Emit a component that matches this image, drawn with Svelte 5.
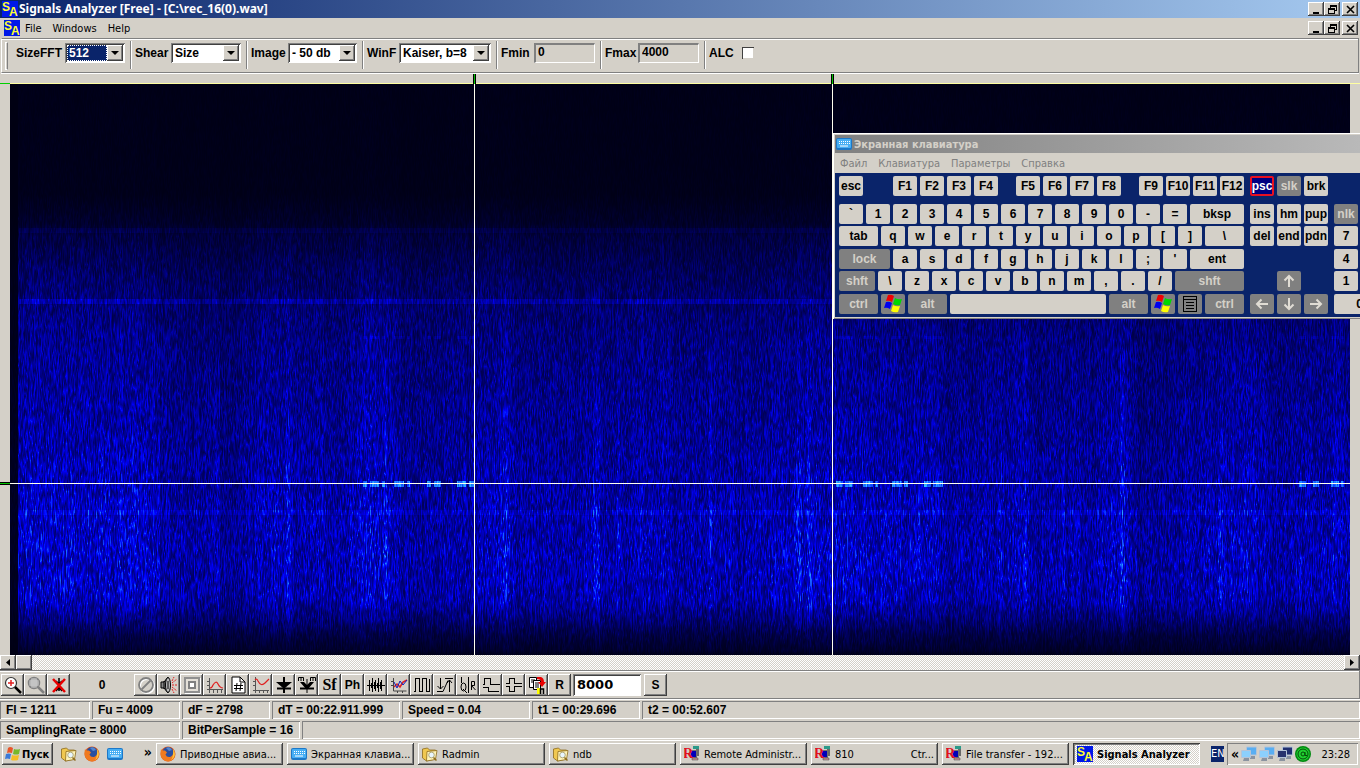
<script lang="ts">
    import { onMount } from 'svelte';

    let canvas: HTMLCanvasElement | undefined;
    let alc: boolean = false;
    let rate: string = "8000";
    let fmin: string = "0";
    let fmax: string = "4000";

    interface Key {
        t: string;
        w?: number;
        off?: boolean;
        gap?: boolean;
        hot?: boolean;
        icon?: string;
    }

    const combos = [
        { id: "sizefft", label: "SizeFFT", value: "512", width: 109, box: 60, active: true },
        { id: "shear", label: "Shear", value: "Size", width: 106, box: 70, active: false },
        { id: "image", label: "Image", value: "- 50 db", width: 106, box: 69, active: false },
        { id: "winf", label: "WinF", value: "Kaiser, b=8", width: 124, box: 92, active: false }
    ];

    const toolsLeft = ["zoomin", "zoomout", "cancel"];
    const tools = ["stop", "speaker", "square", "peak", "hash", "dip", "down", "mm", "Sf", "Ph", "wave", "chart", "pulse", "updown", "qr", "step", "level", "copy", "R"];

    const status1 = [
        { text: "Fl = 1211", w: 90 }, { text: "Fu = 4009", w: 88 }, { text: "dF = 2798", w: 88 },
        { text: "dT = 00:22.911.999", w: 128 }, { text: "Speed = 0.04", w: 128 },
        { text: "t1 = 00:29.696", w: 108 }, { text: "t2 = 00:52.607", w: 0 }
    ];
    const status2 = [
        { text: "SamplingRate = 8000", w: 180 }, { text: "BitPerSample = 16", w: 118 }, { text: "", w: 0 }
    ];

    const tasks = [
        { icon: "firefox", text: "Приводные авиа..." },
        { icon: "keyboard", text: "Экранная клавиа..." },
        { icon: "folder", text: "Radmin" },
        { icon: "folder", text: "ndb" },
        { icon: "radmin", text: "Remote Administr..." },
        { icon: "radmin", text: "810", tail: "Ctr..." },
        { icon: "radmin", text: "File transfer - 192..." },
        { icon: "sa", text: "Signals Analyzer", active: true }
    ];

    function keys(list: string): Key[] {
        return list.split(" ").map((t) => ({ t }));
    }
    const space = (w: number): Key => ({ t: "", w, gap: true });

    const mainRows: Key[][] = [
        [{ t: "esc" }, space(24), ...keys("F1 F2 F3 F4"), space(12), ...keys("F5 F6 F7 F8"), space(12), ...keys("F9 F10 F11 F12")],
        [...keys("` 1 2 3 4 5 6 7 8 9 0 - ="), { t: "bksp", w: 54 }],
        [{ t: "tab", w: 39 }, ...keys("q w e r t y u i o p [ ]"), { t: "\\", w: 39 }],
        [{ t: "lock", w: 51, off: true }, ...keys("a s d f g h j k l ; '"), { t: "ent", w: 54 }],
        [{ t: "shft", w: 36, off: true }, ...keys("\\ z x c v b n m , . /"), { t: "shft", w: 69, off: true }],
        [{ t: "ctrl", w: 39, off: true }, { t: "", off: true, icon: "win" }, { t: "alt", w: 39, off: true }, { t: "", w: 156 },
            { t: "alt", w: 39, off: true }, { t: "", off: true, icon: "win" }, { t: "", off: true, icon: "menu" }, { t: "ctrl", w: 39, off: true }]
    ];
    const navRows: Key[][] = [
        [{ t: "psc", hot: true }, { t: "slk", off: true }, { t: "brk" }],
        keys("ins hm pup"),
        keys("del end pdn"),
        [],
        [space(24), { t: "", off: true, icon: "up" }],
        [{ t: "", off: true, icon: "left" }, { t: "", off: true, icon: "downarrow" }, { t: "", off: true, icon: "right" }]
    ];
    const padRows: Key[][] = [[], [{ t: "nlk", off: true }], keys("7"), keys("4"), keys("1"), [{ t: "0", w: 51 }]];
    const blocks = [mainRows, navRows, padRows];

    // brightness by height and by time, as [position, level] points
    const rowPoints = [[0, 0.02], [110, 0.03], [140, 0.09], [152, 0.17], [200, 0.31], [260, 0.42], [350, 0.51], [400, 0.56], [470, 0.62], [515, 0.59], [535, 0.38], [550, 0.2], [565, 0.1], [571, 0.02]];
    const colPoints = [[0, 0.1], [7, 0.1], [8, 1.06], [144, 1.06], [147, 0.86], [206, 0.88], [211, 0.72], [230, 0.84], [265, 1], [300, 0.95], [330, 0.9], [356, 1.1], [384, 1.05], [392, 0.82], [440, 0.88], [470, 0.95], [500, 1], [507, 0.88], [560, 0.92], [640, 0.95], [730, 0.92], [782, 0.95], [822, 1.05], [862, 1], [930, 0.98], [938, 0.84], [1012, 1], [1020, 0.87], [1080, 0.87], [1112, 1.08], [1130, 0.78], [1185, 0.95], [1240, 1.02], [1270, 0.87], [1340, 1]];
    const stripes = [[148, 1], [208, 1], [278, 2], [375, 2], [495, 2], [586, 3], [608, 1], [700, 1], [787, 3], [799, 2], [1015, 1], [1053, 1], [1112, 2], [1210, 2], [1290, 1]];
    const bursts = [[353, 4], [360, 9], [372, 3], [384, 10], [397, 3], [417, 4], [424, 7], [447, 9], [459, 5], [826, 7], [835, 8], [853, 10], [865, 3], [882, 10], [894, 4], [914, 7], [923, 10], [1289, 7], [1303, 6], [1321, 8], [1331, 3]];

    function lerpPoints(points: number[][], x: number): number {
        for (let i = 1; i < points.length; i++) {
            if (x <= points[i][0]) {
                const [x0, y0] = points[i - 1];
                const [x1, y1] = points[i];
                return y0 + (y1 - y0) * (x - x0) / (x1 - x0);
            }
        }
        return points[points.length - 1][1];
    }

    function draw(): void {
        if (!canvas) return;
        const w = canvas.clientWidth;
        const h = canvas.clientHeight;
        canvas.width = w;
        canvas.height = h;
        const ctx = canvas.getContext("2d");
        if (!ctx) return;

        let seed = 1211;
        const rnd = () => {
            seed = (seed * 1664525 + 1013904223) >>> 0;
            return seed / 4294967296;
        };
        const img = ctx.createImageData(w, h);
        let slow = 0;
        for (let x = 0; x < w; x++) {
            const px = x * 1340 / w;
            slow = slow * 0.75 + (rnd() - 0.5) * 0.1;
            const col = lerpPoints(colPoints, px) * (1 + slow + (rnd() - 0.5) * 0.14);
            let glow = 0;
            for (const [sx, sw] of stripes) {
                if (Math.abs(px - sx) <= sw) glow = 0.25;
            }
            const burst = bursts.some(([bx, bw]) => px >= bx && px < bx + bw);
            const tone = 0.5 + rnd();
            let a = rnd();
            let b = rnd();
            let step = 0;
            let len = 3;
            for (let y = 0; y < h; y++) {
                const py = y * 571 / h;
                if (step >= len) {
                    a = b;
                    b = rnd();
                    step = 0;
                    len = 3 + Math.floor(rnd() * 4);
                }
                const n = a + (b - a) * step / len;
                step++;
                let v = lerpPoints(rowPoints, py);
                v *= (col + glow * Math.min(1, py / 450)) * (0.5 + 0.85 * n + 0.3 * n * n * n);
                if (px > 8) {
                    if (py > 143 && py < 149) v += 0.07 * col * tone;
                    if (py > 214 && py < 220) v += 0.2 * col * tone;
                    if (py > 425 && py < 431) v += 0.12 * col * tone;
                    if (burst && py > 251 && py < 255) v += 0.12;
                    if (burst && py > 396 && py < 403) v = 0.95 + n * 0.5;
                }
                const i = (y * w + x) * 4;
                img.data[i] = v > 0.9 ? Math.min(60, (v - 0.9) * 100) : 0;
                img.data[i + 1] = v > 0.84 ? Math.min(200, (v - 0.84) * 340) : 0;
                img.data[i + 2] = Math.min(255, 18 + v * 280);
                img.data[i + 3] = 255;
            }
        }
        ctx.putImageData(img, 0, 0);
    }

    onMount(() => {
        draw();
    });
</script>

<svelte:window on:resize={draw} />

{#snippet icon(name: string)}
    {#if name === "sa"}
        <svg class="i16" viewBox="0 0 16 16"><rect width="16" height="16" fill="#0018e8" /><text x="0" y="10" class="sa-text">S</text><text x="7" y="15" class="sa-text">A</text></svg>
    {:else if name === "keyboard"}
        <svg class="i16" viewBox="0 0 16 16"><rect x="0" y="2" width="16" height="12" rx="2" fill="#1d78c8" /><rect x="1" y="3" width="14" height="9" rx="1" fill="#46aef4" /><path d="M3 5.5h11M3 7.5h11" stroke="#fff" stroke-dasharray="1 1" /><path d="M4 10h8" stroke="#fff" /></svg>
    {:else if name === "folder"}
        <svg class="i16" viewBox="0 0 16 16"><path d="M.5 3l5-1 2 2h6v9l-9 2-4-3z" fill="#f0c850" stroke="#8c6a1c" stroke-width=".8" /><path d="M5 5.500l10-1-1.500 9-9 1.500z" fill="#fff3b8" stroke="#8c6a1c" stroke-width=".8" /><circle cx="9.500" cy="9" r="2.800" fill="#e9f6ff" stroke="#a09868" stroke-width=".8" /><path d="M11.500 11.500l3 3" stroke="#8c6a1c" stroke-width="1.500" /></svg>
    {:else if name === "firefox"}
        <svg class="i16" viewBox="0 0 16 16"><circle cx="8" cy="8" r="7.5" fill="#d9541a" /><circle cx="8" cy="6.500" r="5.500" fill="#2a4f9f" /><path d="M6 2q4-2 6 2l-3 1z" fill="#5286cf" /><path d="M1 3q1 2 4 1.500l2 2-1.500 2q1 3 4.500 2.500 3-1 3.500-5 3 3 0 7-3 3.500-8 2Q-1 12 1 3z" fill="#f07a20" /><path d="M13 3q3 4 1 8-1 2-3 3 3-4 2-11z" fill="#ffc83a" /></svg>
    {:else if name === "radmin"}
        <svg class="i16" viewBox="0 0 16 16"><path d="M9 0h6v3H9z" fill="#2a9a8a" /><path d="M12 3h3v7h-3z" fill="#686868" /><path d="M6 4h7v8H6z" fill="#707070" /><path d="M7 5h5v6H7z" fill="#0000b8" /><path d="M8 12h6v2H8z" fill="#c89090" stroke="#444" stroke-width=".5" /><text x="-1" y="12" class="r-text">R</text></svg>
    {:else if name === "win"}
        <svg class="i20" viewBox="0 0 20 20"><path d="M5 1q3-1 6 1L9 8Q6 6 3 7z" fill="#f00000" /><path d="M12 4q3 2 7 1l-2 6q-4 1-7-1z" fill="#00d800" /><path d="M3 8q3-1 6 1l-2 6q-3-2-6-1z" fill="#0000f0" /><path d="M10 11q3 2 7 1l-2 6q-4 1-7-1z" fill="#ffff00" /></svg>
    {:else if name === "start"}
        <svg class="i16" viewBox="0 0 16 16"><path d="M4 2q2-2 5 0L8 7Q5 6 3 7z" fill="#e8562a" /><path d="M10 3q3 1 6 0l-1 5q-3 1-6 0z" fill="#77b82a" /><path d="M2 8q3-1 5 0l-1 5q-3-1-5 0z" fill="#3a7ad8" /><path d="M8 9q3 1 7 0l-1 5q-4 1-7 0z" fill="#f5bd25" /></svg>
    {:else if name === "menu"}
        <svg class="i16 crisp" viewBox="0 0 16 16"><path d="M1 0h14v16H1z" fill="#000" /><path d="M2 1h12v2H2zM2 4h12v11H2z" fill="#808080" /><path d="M4 6.500h8M4 9.500h8M4 12.500h8" stroke="#000" /></svg>
    {:else if name === "up" || name === "downarrow" || name === "left" || name === "right"}
        <svg class="i16 {name}" viewBox="0 0 16 16"><path d="M8 14V3M3.500 7.500L8 3l4.500 4.500" fill="none" stroke="#e0dcd4" stroke-width="2" /></svg>
    {:else if name === "zoomin"}
        <svg class="i18" viewBox="0 0 18 18"><circle cx="7" cy="7" r="5.500" fill="#fff" stroke="#333" stroke-width="1.200" /><path d="M4 7h6M7 4v6" stroke="#e02020" stroke-width="1.500" /><path d="M11 11l6 6" stroke="#000" stroke-width="2.500" /></svg>
    {:else if name === "zoomout"}
        <svg class="i18" viewBox="0 0 18 18"><circle cx="7" cy="7" r="5.500" fill="#aaa" stroke="#808080" stroke-width="1.500" /><path d="M2 5h10M2 7h10M2 9h10M5 2v10M7 2v10M9 2v10" stroke="#ddd" stroke-width=".6" /><path d="M11 11l6 6" stroke="#808080" stroke-width="2.500" /></svg>
    {:else if name === "cancel"}
        <svg class="i18" viewBox="0 0 18 18"><path d="M9 2v13M6 5l3 3 3-3M6 15l3-4 3 4" stroke="#000" fill="none" stroke-width="1.500" /><path d="M3 3l12 13M15 3L3 16" stroke="#e80000" stroke-width="2.500" /></svg>
    {:else if name === "stop"}
        <svg class="i18" viewBox="0 0 18 18"><circle cx="10" cy="10" r="7" fill="none" stroke="#fff" stroke-width="2" /><g fill="none" stroke="#808080" stroke-width="1.800"><circle cx="9" cy="9" r="7" /><path d="M4.500 13.500l9-9" /></g></svg>
    {:else if name === "speaker"}
        <svg class="i18" viewBox="0 0 18 18"><path d="M1 6h3l4-5v16l-4-5H1z" fill="#888" stroke="#000" /><ellipse cx="8" cy="9" rx="2.500" ry="7.500" fill="#bbb" stroke="#000" /><path d="M8 5v8M4 5v8" stroke="#000" /><path d="M12 7l5-4M12 9h5M12 11l5 4M12 5l2-4M12 13l2 4" stroke="#e02020" stroke-dasharray="2 1" /></svg>
    {:else if name === "square"}
        <svg class="i18 crisp" viewBox="0 0 18 18"><path d="M2 2h16v16H2z" fill="#fff" /><path d="M1 1h16v16H1z" fill="#909090" /><path d="M3 3h12v12H3z" fill="#e4e0d8" /><path d="M5 5h8v8H5z" fill="#808080" /><path d="M7 7h4v4H7z" fill="#fff" /></svg>
    {:else if name === "peak"}
        <svg class="i18" viewBox="0 0 18 18"><path d="M3.500 2v15M1 5.500h3M1 9.500h3M1 13.500h16M7.500 13v4M11.500 13v4M15.500 13v4" stroke="#555" /><path d="M4 12q2 0 3-3 3-5 5-1 2 4 5 4" stroke="#e02020" fill="none" stroke-width="1.200" /></svg>
    {:else if name === "hash"}
        <svg class="i18" viewBox="0 0 18 18"><path d="M3 1h8l5 5v11H3z" fill="#fff" stroke="#000" /><path d="M11 1v5h5" fill="none" stroke="#000" /><path d="M8 7l-1 8M12 7l-1 8M5 9.500h9M5 12.500h9" stroke="#000" /></svg>
    {:else if name === "dip"}
        <svg class="i18" viewBox="0 0 18 18"><path d="M3.500 1v16M1 5.500h3M1 9.500h3M1 14.500h16M7.500 14v3M11.500 14v3M15.500 14v3" stroke="#555" /><path d="M3 4q2-2 3 1 3 6 7 2l4-4" stroke="#e02020" fill="none" stroke-width="1.200" /></svg>
    {:else if name === "down"}
        <svg class="i18" viewBox="0 0 18 18"><path d="M9 1v5M9 12v5" stroke="#000" stroke-width="2" /><path d="M1 6h16l-7 6H8z" fill="#000" /><path d="M2 12.500h14" stroke="#000" stroke-width="2" /></svg>
    {:else if name === "mm"}
        <svg class="i18" viewBox="0 0 18 18"><path d="M.5 5V1.500h5V5M3 1.500V5M12.500 5V1.500h5V5M15 1.500V5M9 3v14" stroke="#000" fill="none" /><path d="M2 6h4l3 3 3-3h4l-6 7H8z" fill="#000" /><path d="M2 12.500h14" stroke="#000" stroke-width="2" /></svg>
    {:else if name === "wave"}
        <svg class="i18 crisp" viewBox="0 0 18 18"><path d="M0 9.500h18M2.500 4v11M5.500 2v14M8.500 4v11M11.500 2v14M14.500 4v11M4 7v5M7 6v7M10 7v5M13 6v7" stroke="#000" /></svg>
    {:else if name === "chart"}
        <svg class="i18" viewBox="0 0 18 18"><path d="M3.500 2v13h13M1 5.500h3M1 9.500h3M7.500 15v2M12.500 15v2" stroke="#444" fill="none" /><path d="M4 11l3-3 3 3 3-5 4-2" stroke="#e02020" fill="none" stroke-width="1.500" /><path d="M4 6l3 6 3-7 3 4 4-5" stroke="#1020c0" fill="none" /></svg>
    {:else if name === "pulse"}
        <svg class="i18 crisp" viewBox="0 0 18 18"><path d="M1 15.500h1.500v-13h4v13h3v-13h4v13h3v-13" stroke="#000" fill="none" /></svg>
    {:else if name === "updown"}
        <svg class="i18" viewBox="0 0 18 18"><path d="M4.500 2v11M1.500 10l3 3 3-3M1 15.500h6l5-11M9 2.500h8M13.500 16V4M11 7l2.500-3L16 7" stroke="#000" fill="none" /></svg>
    {:else if name === "qr"}
        <svg class="i18" viewBox="0 0 18 18"><path d="M2.500 1v6M9.500 1v16" stroke="#000" /><ellipse cx="4.500" cy="11" rx="2.500" ry="4" stroke="#000" fill="none" /><path d="M4 13l4 4" stroke="#000" /><path d="M12.500 14V5.500h3v4h-3l4 4.500" stroke="#000" fill="none" /></svg>
    {:else if name === "step"}
        <svg class="i18 crisp" viewBox="0 0 18 18"><path d="M1 8.500h1.500v-6h6v6h9M1 11.500h5v4h11" stroke="#000" fill="none" /></svg>
    {:else if name === "level"}
        <svg class="i18 crisp" viewBox="0 0 18 18"><path d="M1 7.500h3v-5h5v5h8M1 10.500h3v5h5v-5h8" stroke="#000" fill="none" /></svg>
    {:else if name === "copy"}
        <svg class="i18" viewBox="0 0 18 18"><path d="M1.500 1.500h7v10h-7z" fill="#fff" stroke="#000" /><path d="M5.500 4.500h7v9h-7z" fill="#fff" stroke="#000" /><path d="M3 4h4M3 6h2M7 7h4M7 9h4M7 11h4" stroke="#000" /><path d="M9 1h4q3 1 3 5h2l-4 5-4-5h3q0-3-4-3z" fill="#e80000" /><path d="M9 12h3v6H9z" fill="#ff0" /><path d="M12.500 18v-5h3v5" fill="none" stroke="#000" stroke-width="1.500" /></svg>
    {:else if name === "net" || name === "netoff"}
        <svg class="i16" viewBox="0 0 16 16"><path d="M5.500 1h10v8h-10z" fill={name === "net" ? "#59aef2" : "#223070"} stroke="#b4c4d8" /><path d="M9 10h5v3H9z" fill="#8a93a0" /><path d="M.5 4.500h9v7h-9z" fill={name === "net" ? "#8cd0fd" : "#28336e"} stroke="#b4c4d8" /><path d="M3 12h5v3H2z" fill="#8a93a0" /></svg>
    {:else if name === "at"}
        <svg class="i16" viewBox="0 0 16 16"><circle cx="8" cy="8" r="8" fill="#008a10" /><circle cx="8" cy="8" r="6.500" fill="#20d030" /><circle cx="8" cy="8" r="5" fill="none" stroke="#044c08" /><circle cx="8" cy="8" r="2" fill="none" stroke="#044c08" /><path d="M10 6v3q1 2 2 0" fill="none" stroke="#044c08" /></svg>
    {:else if name === "min"}
        <svg class="i9 crisp" viewBox="0 0 9 9"><path d="M1 7h6v2H1z" /></svg>
    {:else if name === "restore"}
        <svg class="i9 crisp" viewBox="0 0 9 9"><path d="M2.500 3V.5h6v5H7M2 1.500h7M.5 3.500h6v5h-6zM0 4.500h7" fill="none" stroke="#000" /></svg>
    {:else if name === "close"}
        <svg class="i9" viewBox="0 0 9 9"><path d="M1 1l7 7M8 1L1 8" fill="none" stroke="#000" stroke-width="1.600" /></svg>
    {:else if name === "Sf"}
        <span class="serif">Sf</span>
    {:else}
        <span>{name}</span>
    {/if}
{/snippet}

{#snippet windowButtons()}
    <div class="win-buttons">
        <button class="raised" aria-label="Minimize">{@render icon("min")}</button>
        <button class="raised" aria-label="Restore">{@render icon("restore")}</button>
        <button class="raised last" aria-label="Close">{@render icon("close")}</button>
    </div>
{/snippet}

<div class="desktop">
    <header class="title-bar">
        {@render icon("sa")}
        <h1>Signals Analyzer [Free] - [C:\rec_16(0).wav]</h1>
        {@render windowButtons()}
    </header>

    <nav class="menu-bar">
        {@render icon("sa")}
        <button>File</button>
        <button>Windows</button>
        <button>Help</button>
        {@render windowButtons()}
    </nav>

    <div class="top-tools">
        <div class="grip"></div>
        {#each combos as c}
            <div class="field" style="width: {c.width}px">
                <label for={c.id}>{c.label}</label>
                <span class="combo sunken" class:active={c.active} style="width: {c.box}px">
                    <select id={c.id}><option>{c.value}</option></select>
                    <i class="raised"></i>
                </span>
            </div>
            <div class="sep"></div>
        {/each}
        <div class="field edit">
            <label for="fmin">Fmin</label>
            <input id="fmin" class="thin" bind:value={fmin}>
        </div>
        <div class="sep"></div>
        <div class="field edit">
            <label for="fmax">Fmax</label>
            <input id="fmax" class="thin" bind:value={fmax}>
        </div>
        <div class="sep"></div>
        <div class="field check">
            <label for="alc">ALC</label>
            <input id="alc" type="checkbox" bind:checked={alc}>
        </div>
    </div>

    <main class="view">
        <div class="ruler"></div>
        <div class="plot">
            <canvas bind:this={canvas}></canvas>
            <div class="edge"></div>
            <div class="marker t1"></div>
            <div class="marker t2"></div>
            <div class="level"></div>
        </div>

        <section class="osk">
            <div class="osk-title">{@render icon("keyboard")}<span>Экранная клавиатура</span></div>
            <div class="osk-menu">
                <button>Файл</button>
                <button>Клавиатура</button>
                <button>Параметры</button>
                <button>Справка</button>
            </div>
            <div class="osk-keys">
                {#each blocks as rows}
                    <div class="block">
                        {#each rows as row}
                            <div class="row">
                                {#each row as k}
                                    {#if k.gap}
                                        <span style="width: {k.w}px"></span>
                                    {:else}
                                        <button class="key" class:off={k.off} class:hot={k.hot} style="width: {k.w ?? 24}px" aria-label={k.t || k.icon || "space"}>
                                            {#if k.icon}{@render icon(k.icon)}{:else}{k.t}{/if}
                                        </button>
                                    {/if}
                                {/each}
                            </div>
                        {/each}
                    </div>
                {/each}
            </div>
        </section>
    </main>

    <div class="scroll">
        <button class="raised" aria-label="Scroll left"><svg viewBox="0 0 4 7"><path d="M4 0v7L0 3.500z" /></svg></button>
        <div class="thumb raised"></div>
        <button class="raised end" aria-label="Scroll right"><svg viewBox="0 0 4 7"><path d="M0 0v7l4-3.500z" /></svg></button>
    </div>

    <div class="bottom-tools">
        {#each toolsLeft as t}
            <button class="tool raised" aria-label={t}>{@render icon(t)}</button>
        {/each}
        <output>0</output>
        {#each tools as t}
            <button class="tool raised" aria-label={t}>{@render icon(t)}</button>
        {/each}
        <input class="rate sunken" aria-label="Rate" bind:value={rate}>
        <button class="tool raised">S</button>
    </div>

    {#each [status1, status2] as line}
        <div class="status">
            {#each line as s}
                <div class="panel" class:rest={!s.w} style={s.w ? `width: ${s.w}px` : ""}>{s.text}</div>
            {/each}
        </div>
    {/each}

    <footer class="taskbar">
        <button class="start raised">{@render icon("start")}Пуск</button>
        <div class="quick">
            <button aria-label="Explorer">{@render icon("folder")}</button>
            <button aria-label="Firefox">{@render icon("firefox")}</button>
            <button aria-label="Keyboard">{@render icon("keyboard")}</button>
            <button class="more">»</button>
        </div>
        <div class="tasks">
            {#each tasks as t}
                <button class="task raised" class:pressed={t.active}>
                    {@render icon(t.icon)}<span>{t.text}</span>
                    {#if t.tail}<span class="tail">{t.tail}</span>{/if}
                </button>
            {/each}
        </div>
        <span class="lang">EN</span>
        <div class="tray">
            <button class="more">«</button>
            {@render icon("net")}
            {@render icon("net")}
            {@render icon("netoff")}
            {@render icon("at")}
            <time>23:28</time>
        </div>
    </footer>
</div>

<style>
    :global(body) { margin: 0; background: #d4d0c8; overflow: hidden; }

    .desktop {
        height: 100vh;
        display: flex;
        flex-direction: column;
        background: #d4d0c8;
        color: #000;
        font: bold 12px "Liberation Sans", Arial, sans-serif;
    }

    button {
        margin: 0;
        padding: 0;
        border: 0;
        background: none;
        color: inherit;
        font: inherit;
    }
    button:focus-visible { outline: 1px dotted #000; }
    svg { display: block; flex: none; }
    .i9 { width: 9px; height: 9px; }
    .i16 { width: 16px; height: 16px; }
    .i18 { width: 18px; height: 18px; }
    .i20 { width: 20px; height: 20px; }
    .crisp { shape-rendering: crispEdges; }
    .sa-text { font: bold 12px "Liberation Sans", sans-serif; fill: #ffff30; }
    .r-text { font: bold 14px "Liberation Serif", serif; fill: #e01020; }

    .raised {
        background: #d4d0c8;
        box-shadow: inset -1px -1px #404040, inset 1px 1px #fff, inset -2px -2px #808080;
    }
    .sunken { box-shadow: inset 1px 1px #808080, inset -1px -1px #fff, inset 2px 2px #404040; }

    .title-bar, .menu-bar {
        display: flex;
        align-items: center;
        box-sizing: border-box;
        padding: 0 2px;
    }
    .title-bar {
        height: 18px;
        gap: 1px;
        background: linear-gradient(90deg, #0a246a, #a6caf0);
        color: #fff;
    }
    h1 { margin: 0; font: bold 12px/18px "Noto Sans", sans-serif; }
    .menu-bar {
        height: 20px;
        padding-left: 4px;
        gap: 11px;
        font: 11px "DejaVu Sans Condensed", "DejaVu Sans", sans-serif;
    }
    .menu-bar > button:first-of-type { margin-left: -6px; }

    .win-buttons { display: flex; margin-left: auto; color: #000; }
    .win-buttons button {
        width: 16px;
        height: 14px;
        display: flex;
        align-items: center;
        justify-content: center;
    }
    .win-buttons .last { margin-left: 2px; }

    .top-tools {
        display: flex;
        height: 29px;
        margin: 0 1px;
        padding: 2px 3px;
        border: 1px solid #808080;
        border-left-color: #fff;
        box-shadow: inset 0 1px #fff, 0 1px #fff;
    }
    .grip { width: 1px; margin: 1px 8px 0 0; border: 1px solid #fff; border-right-color: #808080; }
    .sep { width: 1px; margin: 0 4px 1px 5px; background: #808080; box-shadow: 1px 0 #fff; }
    .field {
        height: 23px;
        display: flex;
        align-items: center;
        justify-content: space-between;
    }
    .edit { width: 94px; }
    .check { width: 45px; }
    .combo { display: flex; height: 20px; box-sizing: border-box; padding: 2px; background: #fff; }
    .combo select {
        appearance: none;
        flex: 1;
        min-width: 0;
        margin: 0;
        padding: 0 0 0 2px;
        border: 0;
        border-radius: 0;
        outline: 0;
        background: #fff;
        color: #000;
        font: inherit;
    }
    .active select { background: #0a246a; color: #fff; outline: 1px dotted #fff; outline-offset: -1px; }
    .combo i { width: 16px; display: flex; align-items: center; justify-content: center; pointer-events: none; }
    .combo i::after { content: ""; border: 4px solid transparent; border-top-color: #000; border-bottom: 0; }
    .thin {
        width: 61px;
        height: 20px;
        box-sizing: border-box;
        padding: 0 4px 2px 2px;
        border: 1px solid #fff;
        border-top: 2px solid #808080;
        border-left: 2px solid #808080;
        background: #d4d0c8;
        font: inherit;
    }
    .check input {
        appearance: none;
        width: 12px;
        height: 12px;
        margin: 0;
        background: #fff;
        box-shadow: inset 1px 1px #404040, inset -1px -1px #d4d0c8;
    }
    .check input:checked { background: #404040; }

    .view { position: relative; flex: 1; min-height: 0; display: flex; flex-direction: column; }
    .ruler { height: 10px; border-bottom: 1px solid #ffffa0; }
    .plot { position: relative; flex: 1; min-height: 0; margin: 0 10px; }
    canvas { display: block; width: 100%; height: 100%; background: #000014; }
    .edge { position: absolute; left: -10px; top: -1px; width: 10px; height: 1px; background: #00d000; }
    .marker { position: absolute; top: 0; bottom: 0; width: 1px; background: #fffff0; }
    .marker::before {
        content: "";
        position: absolute;
        top: -10px;
        left: -1px;
        width: 1px;
        height: 10px;
        background: #00c000;
        border: solid #000;
        border-width: 0 1px;
    }
    .t1 { left: 34.65%; }
    .t2 { left: 61.35%; }
    .level { position: absolute; top: 69.88%; left: 0; right: 0; height: 1px; background: #fffff0; }
    .level::before {
        content: "";
        position: absolute;
        top: -1px;
        left: -10px;
        width: 10px;
        height: 1px;
        background: #00c000;
        border: solid #000;
        border-width: 1px 0;
    }

    .osk {
        position: absolute;
        top: 60px;
        left: 61.25%;
        right: 0;
        overflow: hidden;
        padding: 2px 0 2px 2px;
        background: #d4d0c8;
        box-shadow: inset 1px 1px #fff, inset 0 -1px #808080;
    }
    .osk-title {
        height: 18px;
        padding-left: 1px;
        display: flex;
        align-items: center;
        gap: 2px;
        background: linear-gradient(90deg, #808080, #b9b9b9);
        color: #d4d0c8;
        font: bold 11px "DejaVu Sans Condensed", "DejaVu Sans", sans-serif;
    }
    .osk-menu {
        height: 20px;
        padding-left: 5px;
        display: flex;
        align-items: center;
        gap: 11px;
        color: #808080;
        font: 11px "DejaVu Sans Condensed", "DejaVu Sans", sans-serif;
    }
    .osk-keys { display: flex; gap: 6px; padding: 3px 4px; background: #0a246a; }
    .block { flex: none; }
    .row { display: flex; gap: 3px; height: 20px; margin-bottom: 2px; }
    .row:first-child { margin-bottom: 8px; }
    .row:nth-child(3), .row:nth-child(5) { margin-bottom: 3px; }
    .row:last-child { margin-bottom: 0; }
    .row > span { flex: none; }
    .key {
        flex: none;
        display: flex;
        align-items: center;
        justify-content: center;
        border-radius: 2px;
        background: #d4d0c8;
        white-space: nowrap;
    }
    .off { background: #808080; color: #d4d0c8; }
    .hot { background: #000080; color: #fff; box-shadow: inset 0 0 0 2px #e81020; }
    .downarrow { rotate: 180deg; }
    .left { rotate: -90deg; }
    .right { rotate: 90deg; }

    .scroll { display: flex; height: 15px; background: repeating-conic-gradient(#fff 0 25%, #d4d0c8 0 50%) 0 0 / 2px 2px; }
    .scroll button { width: 16px; display: flex; align-items: center; justify-content: center; }
    .scroll svg { width: 4px; height: 7px; }
    .thumb { width: 16px; }
    .scroll .end { margin-left: auto; }

    .bottom-tools {
        display: flex;
        align-items: center;
        height: 27px;
        padding-left: 1px;
        border: 1px solid #808080;
        border-left: 0;
        box-shadow: inset 0 1px #fff, 0 1px #fff;
    }
    .tool { width: 23px; height: 22px; display: flex; align-items: center; justify-content: center; }
    .serif { font: bold 16px "Liberation Serif", serif; }
    output { width: 64px; text-align: center; }
    .rate {
        width: 68px;
        height: 22px;
        box-sizing: border-box;
        margin: 0 3px 0 2px;
        padding: 0 4px;
        border: 0;
        background: #fff;
        font: bold 13px "DejaVu Sans", sans-serif;
    }

    .status { display: flex; gap: 2px; margin-top: 2px; height: 18px; }
    .panel {
        box-sizing: border-box;
        padding-left: 6px;
        line-height: 18px;
        white-space: nowrap;
        box-shadow: inset 1px 1px #808080, inset -1px -1px #fff;
    }
    .rest { flex: 1; }

    .taskbar {
        display: flex;
        align-items: center;
        height: 26px;
        margin-top: 1px;
        padding: 0 2px 1px;
        border-top: 1px solid #fff;
        font: 11px "DejaVu Sans Condensed", "DejaVu Sans", sans-serif;
    }
    .start {
        width: 51px;
        height: 22px;
        display: flex;
        align-items: center;
        padding-left: 2px;
        gap: 2px;
        font-weight: bold;
    }
    .quick { width: 103px; padding-left: 8px; box-sizing: border-box; display: flex; align-items: center; gap: 7px; }
    .more { align-self: flex-start; font-size: 14px; line-height: 12px; font-weight: bold; }
    .quick .more { margin-left: auto; margin-right: 4px; }
    .tasks { flex: 1; min-width: 0; display: flex; gap: 4px; }
    .task {
        flex: 1 1 0;
        min-width: 0;
        height: 22px;
        padding: 0 4px;
        display: flex;
        align-items: center;
        gap: 4px;
        white-space: nowrap;
        overflow: hidden;
    }
    .task .tail { margin-left: auto; }
    .pressed {
        background: repeating-conic-gradient(#fff 0 25%, #d4d0c8 0 50%) 0 0 / 2px 2px;
        box-shadow: inset 1px 1px #404040, inset -1px -1px #fff, inset 2px 2px #808080;
        font-weight: bold;
    }
    .lang { width: 13px; height: 16px; margin: 0 3px 0 11px; overflow: hidden; background: #0a246a; color: #fff; line-height: 16px; }
    .tray {
        width: 131px;
        height: 22px;
        box-sizing: border-box;
        padding: 0 8px 0 4px;
        display: flex;
        align-items: center;
        gap: 2px;
        box-shadow: inset 1px 1px #808080, inset -1px -1px #fff;
    }
    .tray .more { align-self: center; }
    .tray time { margin-left: auto; }
</style>
